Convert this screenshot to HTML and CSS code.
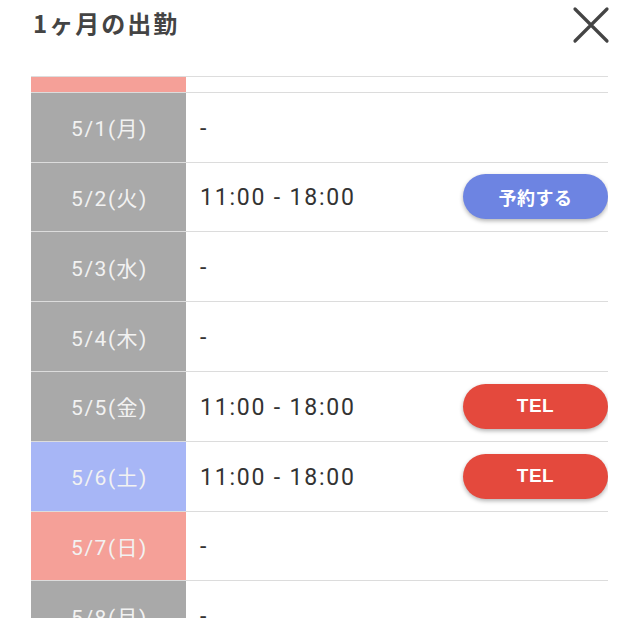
FILE: index.html
```html
<!DOCTYPE html>
<html lang="ja">
<head>
<meta charset="utf-8">
<link rel="stylesheet" href="styles.css">
</head>
<body>
<div class="modal">
  <header class="head">
    <h1 class="title">1ヶ月の出勤</h1>
    <svg class="close" width="38" height="38" viewBox="0 0 38 38" aria-label="閉じる">
      <path d="M3 3 L35 35 M35 3 L3 35" stroke="#444" stroke-width="3.2" fill="none" stroke-linecap="round"/>
    </svg>
  </header>
  <div class="scroller">
    <ul class="list">
      <li class="row"><div class="date sun">4/30(日)</div><div class="info"><span class="time">-</span></div></li>
      <li class="row"><div class="date">5/1(月)</div><div class="info"><span class="time">-</span></div></li>
      <li class="row"><div class="date">5/2(火)</div><div class="info"><span class="time">11:00 - 18:00</span><button class="btn reserve">予約する</button></div></li>
      <li class="row"><div class="date">5/3(水)</div><div class="info"><span class="time">-</span></div></li>
      <li class="row"><div class="date">5/4(木)</div><div class="info"><span class="time">-</span></div></li>
      <li class="row"><div class="date">5/5(金)</div><div class="info"><span class="time">11:00 - 18:00</span><button class="btn tel">TEL</button></div></li>
      <li class="row"><div class="date sat">5/6(土)</div><div class="info"><span class="time">11:00 - 18:00</span><button class="btn tel">TEL</button></div></li>
      <li class="row"><div class="date sun">5/7(日)</div><div class="info"><span class="time">-</span></div></li>
      <li class="row"><div class="date">5/8(月)</div><div class="info"><span class="time">-</span></div></li>
      <li class="row"><div class="date">5/9(火)</div><div class="info"><span class="time">-</span></div></li>
    </ul>
  </div>
</div>
</body>
</html>
```

FILE: styles.css
```css
* { box-sizing: border-box; }
html, body { margin: 0; padding: 0; background: #fff; }
body {
  font-family: "Noto Sans CJK JP", "Noto Sans", sans-serif;
  width: 640px;
  height: 640px;
  overflow: hidden;
}
.modal { padding: 0 32px 0 31px; }
.head {
  height: 76px;
  display: flex;
  justify-content: space-between;
  align-items: flex-start;
}
.title {
  margin: 7px 0 0 2px;
  font-size: 24px;
  font-weight: 700;
  color: #444;
  line-height: 32px;
  letter-spacing: 2px;
}
.close { margin: 6px -2px 0 0; }
.scroller {
  height: 542px;
  border-top: 1px solid #ddd;
  overflow: hidden;
}
.list {
  list-style: none;
  margin: -54px 0 0 0;
  padding: 0;
}
.row {
  display: grid;
  grid-template-columns: 155px 1fr;
  height: 69.8px;
  border-bottom: 1px solid #dcdcdc;
}
.date {
  background: #a9a9a9;
  color: #f2f2f2;
  font-family: Roboto, "Noto Sans CJK JP", sans-serif;
  font-size: 21px;
  letter-spacing: 1.5px;
  display: flex;
  align-items: center;
  justify-content: center;
  padding-left: 2px;
}
.date.sat { background: #a7b6f6; }
.date.sun { background: #f5a098; }
.info {
  display: flex;
  align-items: center;
  justify-content: space-between;
  padding-left: 14px;
}
.time {
  font-family: Roboto, "Liberation Sans", sans-serif;
  font-size: 23px;
  color: #333;
  letter-spacing: 1.8px;
  padding-top: 2px;
}
.btn {
  width: 145px;
  height: 45px;
  border: none;
  border-radius: 23px;
  color: #fff;
  font-family: "Noto Sans CJK JP", "Noto Sans", sans-serif;
  font-weight: 700;
  font-size: 18px;
  letter-spacing: 0.5px;
  box-shadow: 0 2px 4px rgba(0, 0, 0, 0.3);
  padding: 0;
}
.reserve { background: #6d84e2; }
.tel { background: #e4493d; font-family: "Liberation Sans", Roboto, sans-serif; font-size: 19px; }
```
